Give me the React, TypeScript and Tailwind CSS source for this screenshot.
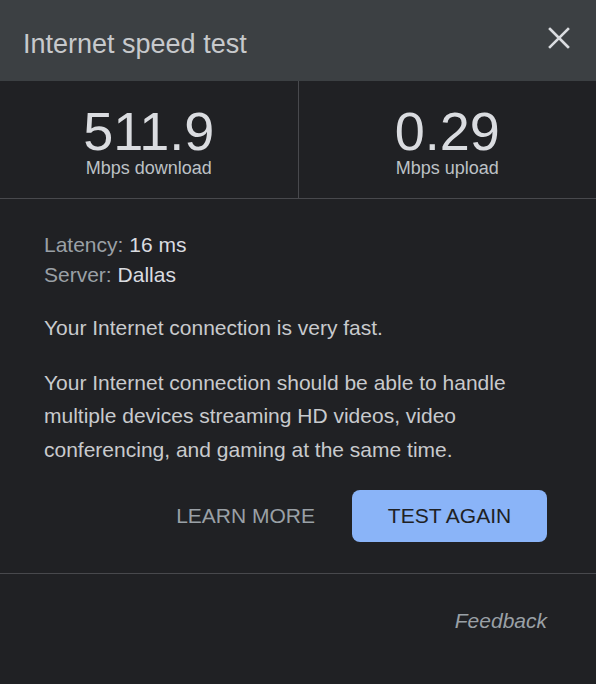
import React from 'react';

const font = { fontFamily: '"Liberation Sans", Arial, sans-serif' };

const Stat: React.FC<{ value: string; label: string }> = ({ value, label }) => (
  <div className="flex flex-1 flex-col items-center pt-[25px]">
    <div className="text-[54px] leading-[50px] text-[#dadce0]">{value}</div>
    <div className="text-[18px] leading-[25px] text-[#bdc1c6]">{label}</div>
  </div>
);

export default function App() {
  return (
    <div className="w-[596px] h-[684px] bg-[#202124] flex flex-col" style={font}>
      <div className="h-[81px] bg-[#3c4043] flex items-start justify-between pl-[23px] pr-[26px]">
        <h1 className="mt-[28px] text-[27px] leading-[32px] text-[#c7c9cc]">Internet speed test</h1>
        <button className="mt-[27px] w-[22px] h-[22px] text-[#dadce0]" aria-label="Close">
          <svg viewBox="0 0 22 22" width="22" height="22" stroke="currentColor" strokeWidth="2.6" strokeLinecap="square">
            <path d="M2 2 L20 20 M20 2 L2 20" />
          </svg>
        </button>
      </div>

      <div className="h-[118px] flex border-b border-[#48494d]">
        <Stat value="511.9" label="Mbps download" />
        <div className="w-px bg-[#48494d]" />
        <Stat value="0.29" label="Mbps upload" />
      </div>

      <div className="px-[44px] pt-[31px]">
        <div className="text-[21px] leading-[29.5px]">
          <div>
            <span className="text-[#9aa0a6]">Latency: </span>
            <span className="text-[#dadce0]">16 ms</span>
          </div>
          <div>
            <span className="text-[#9aa0a6]">Server: </span>
            <span className="text-[#dadce0]">Dallas</span>
          </div>
        </div>
        <p className="mt-[22px] text-[21px] leading-[33.5px] text-[#c8cacd]">Your Internet connection is very fast.</p>
        <p className="mt-[21px] text-[21px] leading-[33.5px] text-[#c8cacd]">
          Your Internet connection should be able to handle multiple devices streaming HD videos, video conferencing, and gaming at the same time.
        </p>
        <div className="mt-[24px] flex justify-end items-center gap-[37px] pr-[5px]">
          <button className="text-[21px] text-[#9aa0a6]">LEARN MORE</button>
          <button className="w-[195px] h-[52px] rounded-[8px] bg-[#8ab4f8] text-[21px] text-[#202124]">TEST AGAIN</button>
        </div>
      </div>

      <div className="mt-[31px] border-t border-[#48494d] flex justify-end pr-[49px] pt-[33px]">
        <span className="italic text-[21px] leading-[28px] text-[#9aa0a6]">Feedback</span>
      </div>
    </div>
  );
}
